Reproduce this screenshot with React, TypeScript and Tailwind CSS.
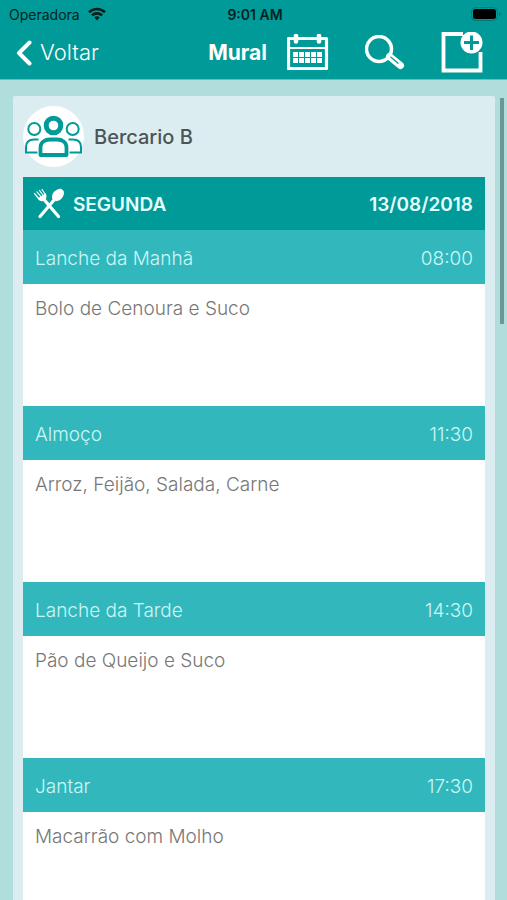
import React from "react";

type Meal = { name: string; time: string; menu: string };

const meals: Meal[] = [
  { name: "Lanche da Manhã", time: "08:00", menu: "Bolo de Cenoura e Suco" },
  { name: "Almoço", time: "11:30", menu: "Arroz, Feijão, Salada, Carne" },
  { name: "Lanche da Tarde", time: "14:30", menu: "Pão de Queijo e Suco" },
  { name: "Jantar", time: "17:30", menu: "Macarrão com Molho" },
];

function WifiIcon() {
  return (
    <svg width="18" height="14" viewBox="0 0 18 14" fill="none" stroke="#06201f" strokeWidth="2.6" aria-hidden="true">
      <path d="M1 5.2C5.4 0.9 12.6 0.9 17 5.2" />
      <path d="M3.9 8.4C6.8 5.7 11.2 5.7 14.1 8.4" />
      <path d="M6.3 10.4C7.9 9 10.1 9 11.7 10.4L9 13.4Z" fill="#06201f" stroke="none" />
    </svg>
  );
}

function BatteryIcon() {
  return (
    <svg width="30" height="14" viewBox="0 0 30 14" aria-hidden="true">
      <rect x="0.5" y="0.5" width="26" height="13" rx="4" fill="none" stroke="#067573" />
      <rect x="2" y="2" width="23" height="10" rx="2.5" fill="#000" />
      <path d="M28 5v4c1.3-.4 1.8-1.2 1.8-2S29.3 5.4 28 5Z" fill="#067573" />
    </svg>
  );
}

function BackIcon() {
  return (
    <svg width="16" height="26" viewBox="0 0 16 26" fill="none" stroke="#fff" strokeWidth="4" strokeLinecap="round" strokeLinejoin="round" aria-hidden="true">
      <path d="M13.5 2.5L3 13L13.5 23.5" />
    </svg>
  );
}

function CalendarIcon() {
  return (
    <svg width="42" height="38" viewBox="0 0 42 38" fill="none" stroke="#fff" aria-hidden="true">
      <path d="M1.5 4.5H39.5V34.5H1.5Z" strokeWidth="3.2" strokeLinejoin="round" />
      <path d="M2 14H39" strokeWidth="1.8" />
      <path d="M9 2V7.5M32 2V7.5" strokeWidth="4.6" strokeLinecap="round" />
      <g fill="#fff" stroke="none">
        {[6, 12, 18, 24, 30].map((x) =>
          [18, 24].map((y) => <rect key={`${x}-${y}`} x={x} y={y} width="5" height="5" />)
        )}
      </g>
    </svg>
  );
}

function SearchIcon() {
  return (
    <svg width="40" height="36" viewBox="0 0 40 36" fill="none" aria-hidden="true">
      <circle cx="14" cy="14" r="12.5" stroke="#fff" strokeWidth="3.5" />
      <path d="M24.5 21.5L35.5 30.5" stroke="#fff" strokeWidth="7" strokeLinecap="round" />
      <path d="M26 22.2L33 28.2" stroke="#009b98" strokeWidth="1.3" strokeLinecap="round" />
    </svg>
  );
}

function AddNoteIcon() {
  return (
    <svg width="42" height="42" viewBox="0 0 42 42" fill="none" aria-hidden="true">
      <path d="M22 2H2.5V38.5H39.5V20" stroke="#fff" strokeWidth="3.8" />
      <circle cx="30.5" cy="10.5" r="11" fill="#fff" />
      <path d="M30.5 3.500V18M23 10.5H38" stroke="#009b98" strokeWidth="3" />
    </svg>
  );
}

function GroupAvatar() {
  return (
    <svg width="61" height="61" viewBox="0 0 61 61" fill="none" stroke="#009b98" aria-hidden="true">
      <circle cx="30.5" cy="30.5" r="30.5" fill="#fff" stroke="none" />
      <g strokeWidth="2">
        <circle cx="11.3" cy="23" r="6" />
        <circle cx="49.7" cy="23" r="6" />
        <path d="M14.500 46.5H3V41C3 36 6 33.500 11 33.500H15.500" />
        <path d="M46.500 46.5H58V41C58 36 55 33.500 50 33.500H45.500" />
      </g>
      <circle cx="30.5" cy="19.5" r="7.3" strokeWidth="5" />
      <path d="M17.500 49V41.500C17.500 36 22 33.500 27 33.500H34C39 33.500 43.500 36 43.500 41.500V49Z" strokeWidth="3.8" strokeLinejoin="round" />
    </svg>
  );
}

function CutleryIcon() {
  return (
    <svg width="32" height="32" viewBox="0 0 32 32" fill="none" stroke="#fff" strokeLinecap="round" aria-hidden="true">
      <path d="M11 11.5L25.500 28.5" strokeWidth="3.2" />
      <path d="M21 12L7 28.5" strokeWidth="3.2" />
      <path d="M1.5 5.500L6.5 11.500M4 3.800L9 9.800M6.500 2.500L11 8.500M9 1.500L12.800 7" strokeWidth="1.2" />
      <path d="M4.500 10.500L12.500 5.500C14.500 9 13 12 10.500 13C8 13.500 6 12.500 4.500 10.500Z" fill="#fff" stroke="none" />
      <ellipse cx="25" cy="7" rx="5" ry="7" transform="rotate(43 25 7)" fill="#fff" stroke="none" />
    </svg>
  );
}

function MealEntry({ name, time, menu }: Meal) {
  return (
    <section>
      <header className="flex h-[54px] items-center justify-between bg-[#32b8bc] px-3 pt-1 text-[19px] font-light text-[#cdf6f6]">
        <h3>{name}</h3>
        <time>{time}</time>
      </header>
      <p className="min-h-[122px] bg-white px-3 pt-3 text-[19px] leading-[26px] font-light text-[#777777]">{menu}</p>
    </section>
  );
}

export default function App() {
  return (
    <div className="flex h-screen flex-col overflow-hidden bg-[#b0dedc] font-['Inter','Liberation_Sans',sans-serif]">
      <div className="shrink-0 border-b border-[#62c0bd] bg-[#009b98]">
        <div className="grid h-7 grid-cols-3 items-center pr-1.5 pl-[9px] text-[14px] text-[#06201f]">
          <div className="flex items-center gap-2">
            <span>Operadora</span>
            <WifiIcon />
          </div>
          <span className="text-center font-semibold">9:01 AM</span>
          <div className="flex justify-end">
            <BatteryIcon />
          </div>
        </div>
        <nav className="flex h-[51px] items-center justify-between pr-6 pb-0.5 pl-4 text-white">
          <button type="button" className="flex items-center gap-2 text-[22px] font-light">
            <BackIcon />
            Voltar
          </button>
          <div className="flex items-center">
            <h1 className="mr-5 text-[21px] font-bold">Mural</h1>
            <button type="button" aria-label="Calendário" className="mr-9">
              <CalendarIcon />
            </button>
            <button type="button" aria-label="Buscar" className="mr-9">
              <SearchIcon />
            </button>
            <button type="button" aria-label="Adicionar">
              <AddNoteIcon />
            </button>
          </div>
        </nav>
      </div>

      <div className="relative min-h-0 flex-1">
        <main className="h-full overflow-y-auto pt-4 pr-3 pl-[13px] [scrollbar-width:none]">
          <article className="rounded-xs bg-[#dcedf1] px-2.5 pt-2.5 pb-2.5">
            <div className="flex items-center gap-2.5 pb-2.5">
              <GroupAvatar />
              <h2 className="text-[20px] font-medium text-[#4b5556]">Bercario B</h2>
            </div>
            <div className="flex h-[53px] items-center justify-between bg-[#009b98] px-3 text-[19px] font-semibold text-[#e6ffff]">
              <div className="-ml-0.5 flex items-center gap-2">
                <CutleryIcon />
                <span className="pt-1">SEGUNDA</span>
              </div>
              <time dateTime="2018-08-13" className="pt-1">
                13/08/2018
              </time>
            </div>
            {meals.map((meal) => (
              <MealEntry key={meal.name} {...meal} />
            ))}
          </article>
        </main>
        <div className="absolute top-[18px] right-[3px] h-[226px] w-1 bg-[#6f9697]" />
      </div>
    </div>
  );
}
